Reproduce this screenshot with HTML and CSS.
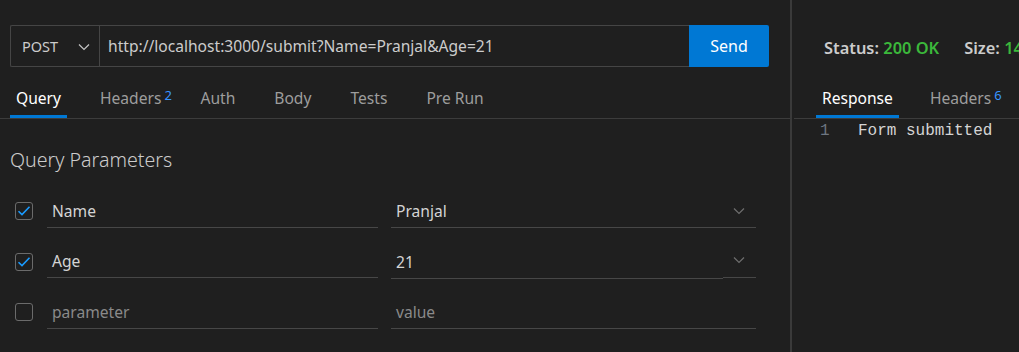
FILE: index.html
```html
<!DOCTYPE html>
<html>
<head>
<meta charset="utf-8">
<link rel="stylesheet" href="styles.css">
</head>
<body>
<div class="app">
  <section class="request">
    <div class="req-bar">
      <div class="method">
        <span class="method-name">POST</span>
        <svg class="chev" width="12" height="8" viewBox="0 0 12 8"><path d="M1 1.5 L6 6.5 L11 1.5" fill="none" stroke="#c5c5c5" stroke-width="1.2"/></svg>
      </div>
      <div class="url">http://localhost:3000/submit?Name=Pranjal&amp;Age=21</div>
      <button class="send">Send</button>
    </div>
    <nav class="tabs">
      <span class="tab active">Query</span>
      <span class="tab">Headers<sup class="badge">2</sup></span>
      <span class="tab">Auth</span>
      <span class="tab">Body</span>
      <span class="tab">Tests</span>
      <span class="tab">Pre Run</span>
    </nav>
    <h2 class="params-title">Query Parameters</h2>
    <div class="params">
      <div class="param-row">
        <span class="check on"><svg width="14" height="12" viewBox="0 0 14 12"><path d="M1.5 6.2 L5 9.6 L12.5 1.8" fill="none" stroke="#1a9bff" stroke-width="1.6"/></svg></span>
        <div class="field">Name</div>
        <div class="value-field">
          <div class="field">Pranjal</div>
          <span class="drop"><svg width="12" height="8" viewBox="0 0 12 8"><path d="M1 1.5 L6 6.5 L11 1.5" fill="none" stroke="#6e6e6e" stroke-width="1.2"/></svg></span>
        </div>
      </div>
      <div class="param-row">
        <span class="check on"><svg width="14" height="12" viewBox="0 0 14 12"><path d="M1.5 6.2 L5 9.6 L12.5 1.8" fill="none" stroke="#1a9bff" stroke-width="1.6"/></svg></span>
        <div class="field">Age</div>
        <div class="value-field split">
          <div class="field">21</div>
          <span class="drop"><svg width="12" height="8" viewBox="0 0 12 8"><path d="M1 1.5 L6 6.5 L11 1.5" fill="none" stroke="#6e6e6e" stroke-width="1.2"/></svg></span>
        </div>
      </div>
      <div class="param-row">
        <span class="check"></span>
        <div class="field placeholder">parameter</div>
        <div class="value-field">
          <div class="field placeholder">value</div>
        </div>
      </div>
    </div>
  </section>
  <div class="divider"></div>
  <section class="response">
    <div class="status-bar">
      <span class="stat"><b>Status:</b> <span class="ok">200 OK</span></span>
      <span class="stat"><b>Size:</b> <span class="ok">14 Bytes</span></span>
    </div>
    <nav class="tabs rtabs">
      <span class="tab active">Response</span>
      <span class="tab">Headers<sup class="badge">6</sup></span>
    </nav>
    <div class="editor">
      <span class="ln">1</span>
      <span class="code">Form submitted</span>
    </div>
  </section>
</div>
</body>
</html>
```
FILE: styles.css
```css
html, body {
  margin: 0;
  padding: 0;
  background: #1f1f1f;
  height: 352px;
  overflow: hidden;
}
body {
  font-family: "Noto Sans", "Open Sans", sans-serif;
  color: #cccccc;
}
.app {
  display: flex;
  height: 352px;
}
.request {
  width: 790px;
  flex: none;
}
.divider {
  width: 2px;
  background: #3a3a3a;
  flex: none;
}
.response {
  flex: 1;
  min-width: 0;
  overflow: hidden;
  white-space: nowrap;
}
.req-bar {
  display: flex;
  height: 42px;
  margin: 25px 21px 0 10px;
}
.method {
  width: 89px;
  box-sizing: border-box;
  border: 1px solid #454545;
  border-right: none;
  border-radius: 2px 0 0 2px;
  display: flex;
  align-items: center;
  justify-content: space-between;
  padding: 0 9px 0 11px;
  font-size: 14.5px;
  color: #cccccc;
}
.method .chev { margin-top: 1px; }
.url {
  flex: 1;
  box-sizing: border-box;
  border: 1px solid #454545;
  border-right: none;
  display: flex;
  align-items: center;
  padding-left: 8px;
  font-size: 15.6px;
  color: #cccccc;
}
.send {
  width: 80px;
  border: none;
  border-radius: 0 2px 2px 0;
  background: #0078d4;
  color: #ffffff;
  font-family: inherit;
  font-size: 16px;
  padding: 0;
}
.tabs {
  display: flex;
  gap: 27px;
  margin-top: 13px;
  padding-left: 10px;
  height: 38px;
  border-bottom: 1px solid #3c3c3c;
}
.tab {
  position: relative;
  box-sizing: border-box;
  height: 38px;
  padding: 0 6px;
  display: flex;
  align-items: center;
  font-size: 15.6px;
  color: #9d9d9d;
  border-bottom: 3px solid transparent;
}
.tab.active {
  color: #ffffff;
  border-bottom-color: #0078d4;
}
.badge {
  position: absolute;
  left: 100%;
  top: 9px;
  margin-left: -3px;
  font-size: 13px;
  color: #3794ff;
  line-height: 1;
}
.rtabs .tab:last-child { margin-left: -2px; }
.params-title {
  margin: 28px 0 0 10px;
  font-size: 19.6px;
  font-weight: 300;
  line-height: 26px;
  color: #cccccc;
}
.params {
  margin-top: 13px;
  padding-left: 15px;
}
.param-row {
  display: grid;
  grid-template-columns: 18px 331px 364px;
  column-gap: 14px;
  align-items: center;
  height: 50.5px;
}
.value-field {
  display: flex;
  margin-left: -1px;
  align-items: flex-end;
}
.check {
  width: 18px;
  height: 18px;
  box-sizing: border-box;
  border: 1px solid #6b6b6b;
  border-radius: 3px;
  display: flex;
  align-items: center;
  justify-content: center;
}
.field {
  flex: 1;
  height: 33px;
  box-sizing: border-box;
  border-bottom: 1px solid #474747;
  padding-left: 5px;
  display: flex;
  align-items: center;
  font-size: 15.6px;
  color: #d4d4d4;
}
.field.placeholder { color: #8a8a8a; }
.drop {
  width: 33px;
  height: 33px;
  box-sizing: border-box;
  border-bottom: 1px solid #474747;
  display: flex;
  align-items: center;
  justify-content: center;
  padding-right: 2px;
}
.split .drop {
  height: 34px;
  padding-bottom: 2px;
  margin-bottom: 1px;
}
.status-bar {
  display: flex;
  gap: 25px;
  padding-left: 32px;
  margin-top: 36px;
  height: 22px;
  align-items: center;
  font-size: 16.4px;
  font-weight: 600;
}
.stat b { color: #cccccc; font-weight: 600; }
.ok { color: #3bb83b; }
.rtabs {
  margin-top: 22px;
  padding-left: 22px;
  margin-left: 2px;
  gap: 27px;
}
.editor {
  display: flex;
  align-items: center;
  height: 24px;
  padding-left: 28px;
  font-family: "Liberation Mono", "DejaVu Sans Mono", monospace;
  font-size: 16px;
}
.ln { color: #6e7681; width: 38px; }
.code { color: #d4d4d4; }
```
